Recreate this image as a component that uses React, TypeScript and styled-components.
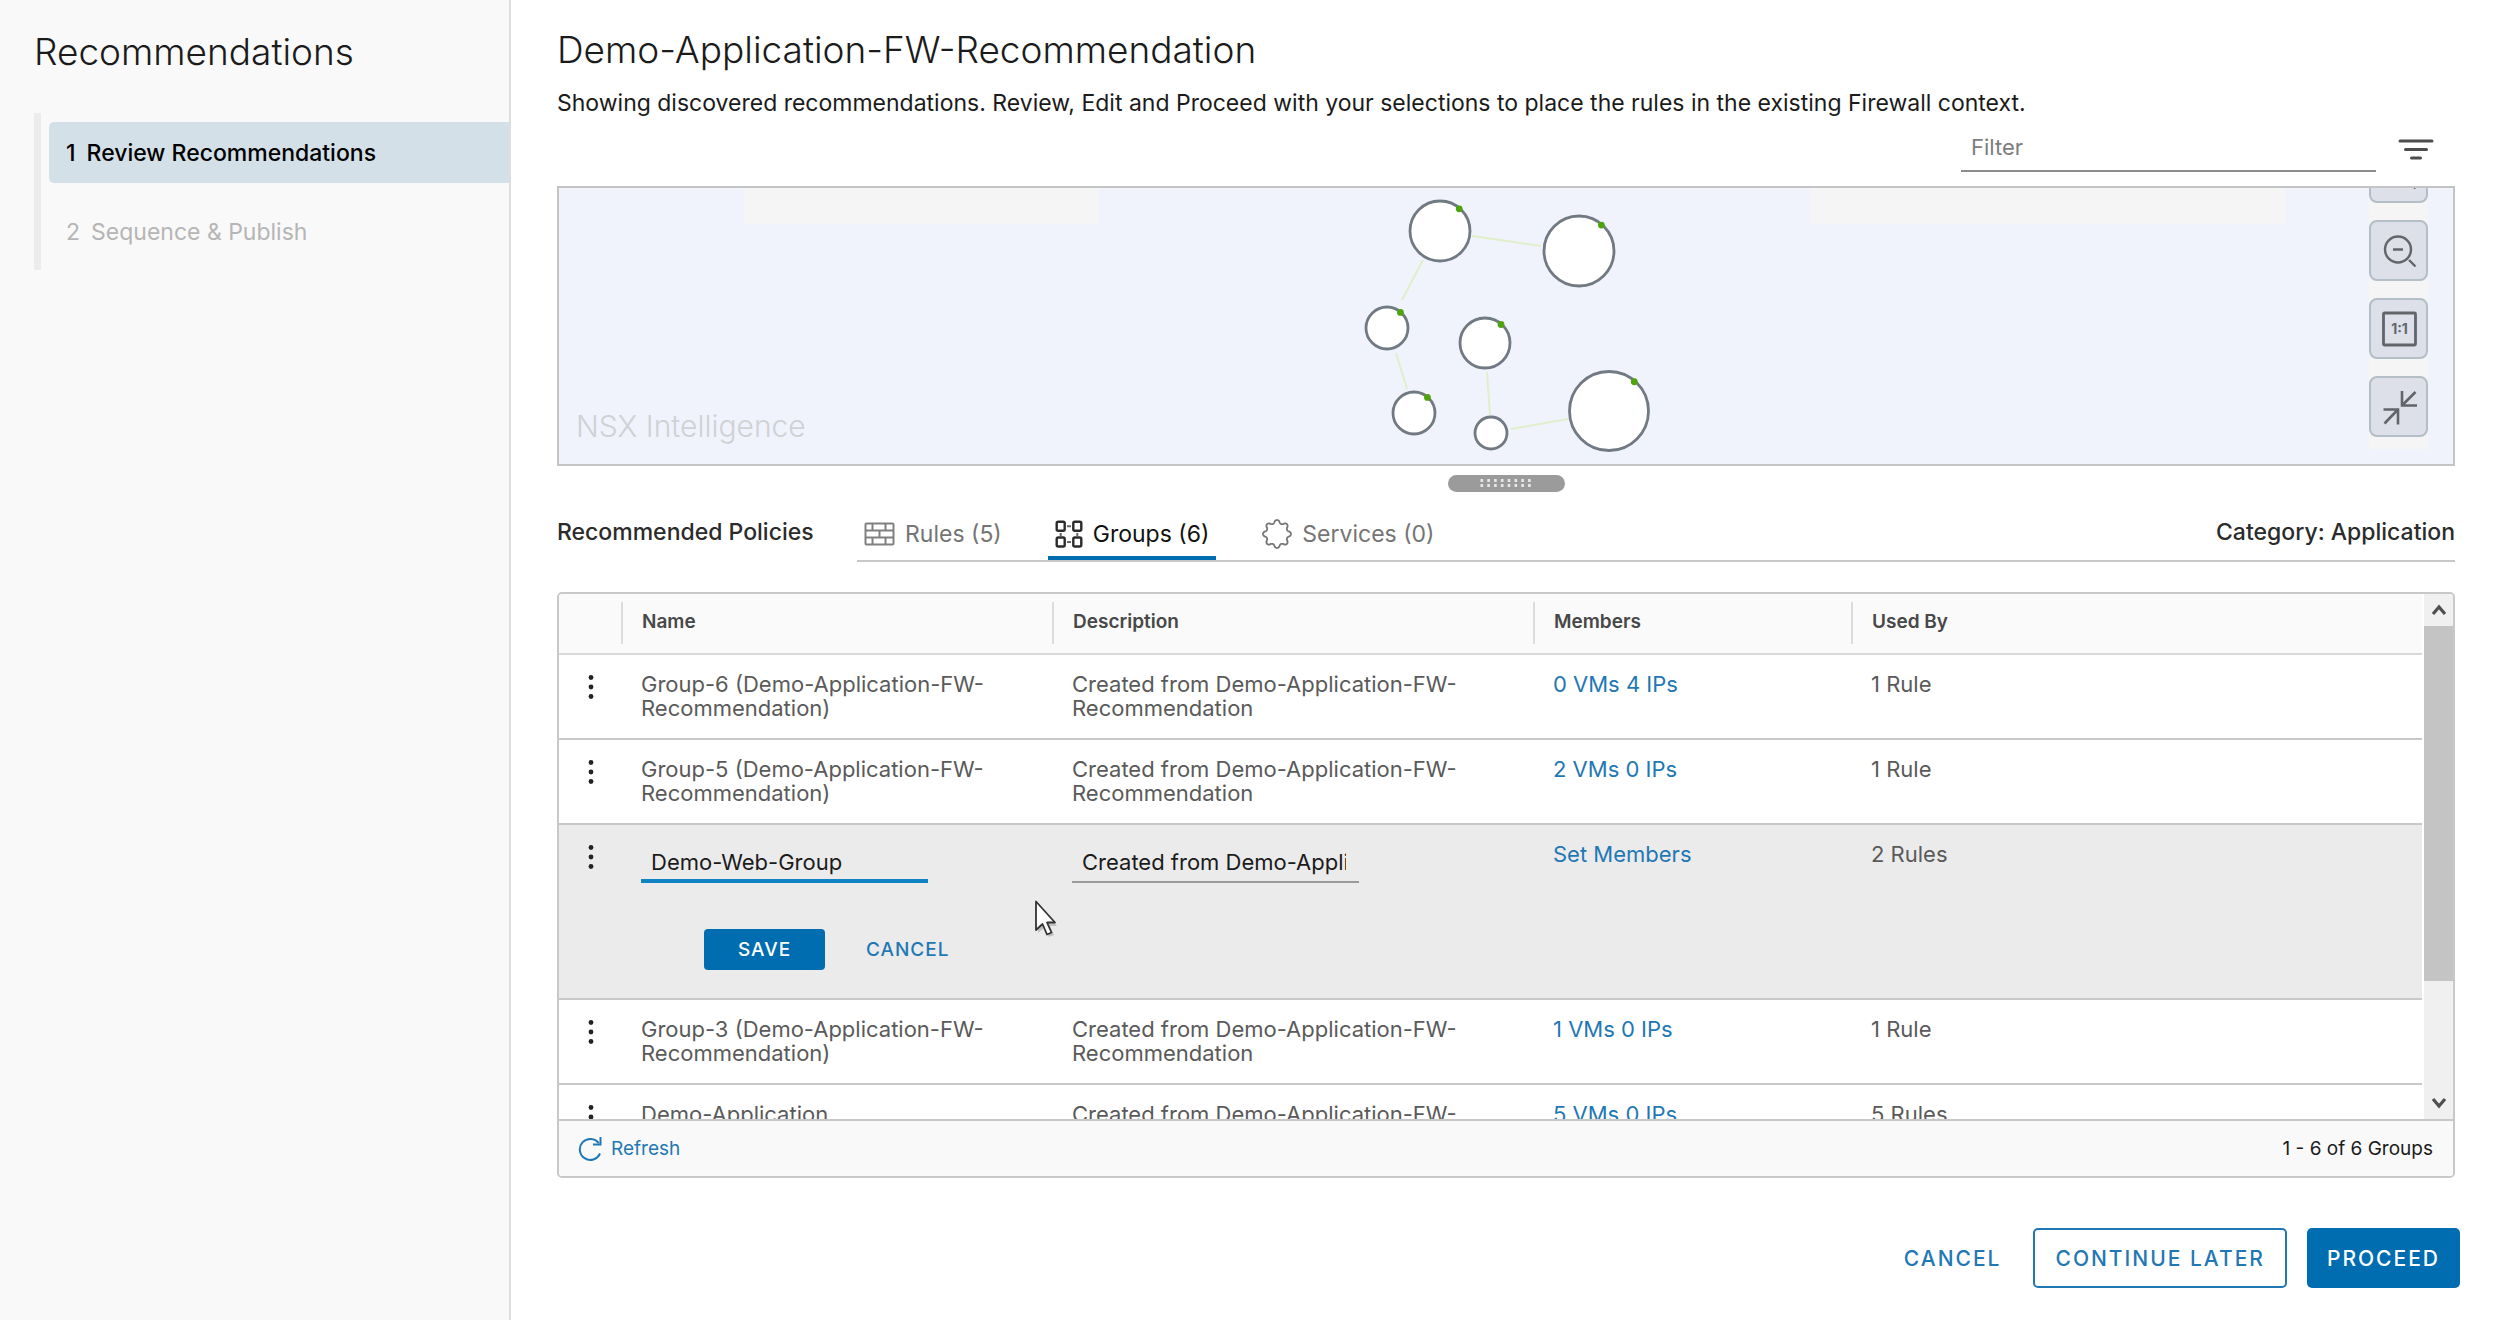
import React from "react";
import styled, { createGlobalStyle } from "styled-components";

const font = `Metropolis, Inter, "Liberation Sans", sans-serif`;
const blue = "#006db0";
const link = "#1f78b4";
const line = "#c8c8c8";

const GlobalStyle = createGlobalStyle`
  *, *::before, *::after { box-sizing: border-box; }
  body { margin: 0; background: #fff; color: #1b1b1b; font-family: ${font}; font-size: 22px; }
  button, input { font-family: inherit; }
  button { background: none; border: 0; padding: 0; cursor: pointer; }
  h1, h2, p, ol { margin: 0; padding: 0; }
  svg { display: block; flex: none; }
`;

const Layout = styled.div`
  display: flex;
  height: 100vh;
  min-height: 1000px;
`;

/* ---------- wizard sidebar ---------- */

const Sidebar = styled.aside`
  flex: none;
  width: 511px;
  padding-top: 30px;
  background: #f9f9f9;
  border-right: 2px solid #dedede;
`;

const SidebarTitle = styled.h2`
  padding-left: 34px;
  font-size: 37px;
  font-weight: 300;
  line-height: 44px;
`;

const Steps = styled.ol`
  display: flex;
  flex-direction: column;
  gap: 18px;
  margin: 39px 0 0 34px;
  padding: 9px 0 8px 8px;
  border-left: 7px solid #ececec;
  list-style: none;
`;

const Step = styled.button<{ $active?: boolean }>`
  display: flex;
  align-items: center;
  gap: 11px;
  width: 100%;
  height: 61px;
  padding-left: 17px;
  border-radius: 5px 0 0 5px;
  background: ${(p) => (p.$active ? "#d3e0e7" : "transparent")};
  color: ${(p) => (p.$active ? "#000" : "#b5b5b5")};
  font-size: 23px;
  font-weight: ${(p) => (p.$active ? 500 : 400)};
`;

/* ---------- main column ---------- */

const Main = styled.main`
  flex: 1;
  min-width: 0;
  display: flex;
  flex-direction: column;
  padding: 28px 39px 32px 46px;
`;

const Title = styled.h1`
  font-size: 37px;
  font-weight: 300;
  line-height: 44px;
`;

const Lead = styled.p`
  margin-top: 16px;
  font-size: 23px;
  line-height: 30px;
`;

const FilterBar = styled.div`
  display: flex;
  justify-content: flex-end;
  align-items: center;
  gap: 22px;
  margin-top: 12px;
  padding-right: 21px;
`;

const FilterInput = styled.input`
  width: 415px;
  height: 42px;
  padding: 0 10px 6px;
  border: 0;
  border-bottom: 2px solid #8c8c8c;
  background: none;
  font-size: 22px;
  outline: none;
  &::placeholder { color: #7d7d7d; opacity: 1; }
`;

const Canvas = styled.section`
  position: relative;
  flex: none;
  display: flex;
  justify-content: center;
  height: 280px;
  margin-top: 14px;
  border: 2px solid #c2c4c6;
  background: #f0f3fc;
  overflow: hidden;
`;

const Patch = styled.div<{ $side: "left" | "right" }>`
  position: absolute;
  top: 0;
  ${(p) => (p.$side === "left" ? "left: 185px; width: 355px;" : "right: 168px; width: 475px;")}
  height: 36px;
  background: #f5f5f5;
`;

const Watermark = styled.div`
  position: absolute;
  left: 17px;
  bottom: 20px;
  color: #cfd1d5;
  font-size: 30px;
  font-weight: 300;
  line-height: 36px;
`;

const ZoomControls = styled.div`
  position: absolute;
  top: -46px;
  right: 25px;
  display: flex;
  flex-direction: column;
  gap: 17px;
  padding-bottom: 12px;
  background: #f5f5f5;
`;

const ZoomButton = styled.button`
  display: flex;
  align-items: center;
  justify-content: center;
  width: 59px;
  height: 61px;
  border: 2px solid #b3bec7;
  border-radius: 8px;
  background: #dde0e8;
  color: #62666b;
`;

const Handle = styled.button`
  display: flex;
  align-items: center;
  justify-content: center;
  flex: none;
  align-self: center;
  width: 117px;
  height: 17px;
  margin-top: 9px;
  border-radius: 9px;
  background: #9b9b9b;
`;

/* ---------- tabs ---------- */

const PolicyBar = styled.div`
  display: flex;
  flex: none;
  height: 54px;
  margin-top: 16px;
`;

const PolicyText = styled.div`
  font-size: 23px;
  font-weight: 500;
  line-height: 48px;
  color: #2b2b2b;
`;

const PolicyTitle = styled(PolicyText)`
  flex: none;
  width: 300px;
`;

const Tabs = styled.div`
  flex: 1;
  display: flex;
  justify-content: space-between;
  border-bottom: 2px solid ${line};
`;

const TabList = styled.div`
  display: flex;
  gap: 39px;
`;

const Tab = styled.button<{ $active?: boolean }>`
  display: flex;
  align-items: center;
  gap: 10px;
  padding: 4px 7px 0;
  border-bottom: 4px solid ${(p) => (p.$active ? blue : "transparent")};
  color: ${(p) => (p.$active ? "#111" : "#757575")};
  font-size: 23px;
`;

/* ---------- data grid ---------- */

const Panel = styled.section`
  flex: 1;
  min-height: 0;
  display: flex;
  flex-direction: column;
  margin-top: 30px;
  border: 2px solid ${line};
  border-radius: 5px;
  overflow: hidden;
`;

const PanelBody = styled.div`
  flex: 1;
  min-height: 0;
  display: flex;
  gap: 2px;
`;

const TableScroll = styled.div`
  flex: 1;
  min-width: 0;
  overflow: hidden;
`;

const Table = styled.table`
  width: 100%;
  table-layout: fixed;
  border-collapse: separate;
  border-spacing: 0;
  color: #5a5a5a;
  line-height: 24px;
`;

const Col = styled.col<{ $width?: number }>`
  width: ${(p) => (p.$width ? `${p.$width}px` : "auto")};
`;

const Head = styled.th`
  padding: 8px 0 9px;
  border-bottom: 2px solid #d9d9d9;
  background: #fafafa;
  color: #484848;
  font-size: 19px;
  font-weight: 600;
  text-align: left;
`;

const HeadLabel = styled.span`
  display: block;
  height: 42px;
  padding-left: 19px;
  border-left: 2px solid #dcdcdc;
  line-height: 40px;
`;

const Cell = styled.td<{ $editing?: boolean }>`
  padding: 17px 20px ${(p) => (p.$editing ? 0 : 18)}px 20px;
  border-bottom: ${(p) => (p.$editing ? "0" : `2px solid ${line}`)};
  background: ${(p) => (p.$editing ? "#ebebeb" : "#fff")};
  vertical-align: top;
`;

const MenuCell = styled(Cell)`
  padding-left: 28px;
  padding-right: 0;
`;

const MenuButton = styled.button`
  display: block;
  padding-top: 3px;
  color: #222;
`;

const MemberLink = styled.a`
  color: ${link};
  text-decoration: none;
`;

const CellInput = styled.input<{ $focused?: boolean }>`
  display: block;
  width: 287px;
  height: 41px;
  padding: ${(p) => (p.$focused ? "2px 10px 0" : "0 13px 0 10px")};
  border: 0;
  border-bottom: ${(p) => (p.$focused ? "4px solid #0f83c4" : "2px solid #9a9a9a")};
  background: none;
  color: #1b1b1b;
  font-size: 22px;
  outline: none;
`;

const ActionCell = styled.td`
  position: relative;
  padding: 46px 0 28px 145px;
  border-bottom: 2px solid ${line};
  background: #ebebeb;
`;

const ActionRow = styled.div`
  display: flex;
  align-items: center;
  gap: 41px;
`;

const Pointer = styled.svg`
  position: absolute;
  left: 475px;
  top: 17px;
`;

const SmallButton = styled.button<{ $solid?: boolean }>`
  width: ${(p) => (p.$solid ? "121px" : "auto")};
  height: 41px;
  border-radius: 4px;
  background: ${(p) => (p.$solid ? blue : "none")};
  color: ${(p) => (p.$solid ? "#fff" : link)};
  font-size: 19px;
  font-weight: 500;
  letter-spacing: 1px;
`;

const Scrollbar = styled.div`
  flex: none;
  display: flex;
  flex-direction: column;
  width: 29px;
  background: #f0f0f0;
`;

const ScrollArrow = styled.button`
  display: flex;
  align-items: center;
  justify-content: center;
  height: 32px;
  color: #505050;
`;

const ScrollTrack = styled.div`
  flex: 1;
`;

const ScrollThumb = styled.div`
  height: 77%;
  background: #c4c4c4;
`;

const PanelFooter = styled.footer`
  flex: none;
  display: flex;
  align-items: center;
  justify-content: space-between;
  height: 57px;
  padding: 0 20px 0 19px;
  border-top: 2px solid ${line};
  background: #f9f9f9;
  font-size: 19px;
`;

const RefreshButton = styled.button`
  display: flex;
  align-items: center;
  gap: 9px;
  color: ${link};
  font-size: 19px;
`;

/* ---------- page actions ---------- */

const Actions = styled.div`
  flex: none;
  display: flex;
  justify-content: flex-end;
  gap: 20px;
  margin: 50px -5px 0 0;
`;

const ActionButton = styled.button<{ $kind: "flat" | "outline" | "solid" }>`
  height: 60px;
  padding: 0 ${(p) => (p.$kind === "flat" ? 12 : 20)}px;
  border: ${(p) => (p.$kind === "outline" ? `2px solid ${link}` : "0")};
  border-radius: 5px;
  background: ${(p) => (p.$kind === "solid" ? blue : "#fff")};
  color: ${(p) => (p.$kind === "solid" ? "#fff" : link)};
  font-size: 21px;
  font-weight: 500;
  letter-spacing: 2px;
`;

/* ---------- drawings ---------- */

const nodes = [
  { x: 84, y: 43, r: 30, dot: true },
  { x: 223, y: 63, r: 35, dot: true },
  { x: 31, y: 140, r: 21, dot: true },
  { x: 129, y: 155, r: 25, dot: true },
  { x: 58, y: 225, r: 21, dot: true },
  { x: 135, y: 245, r: 16, dot: false },
  { x: 253, y: 223, r: 39.5, dot: true },
];

const edges = [
  [116, 48, 185, 58],
  [67, 72, 46, 112],
  [40, 165, 51, 201],
  [131, 184, 134, 227],
  [155, 241, 212, 231],
];

const FlowGraph = () => (
  <svg width="300" height="276" viewBox="0 0 300 276" role="img" aria-label="Recommendation graph">
    {edges.map(([x1, y1, x2, y2], i) => (
      <line key={i} x1={x1} y1={y1} x2={x2} y2={y2} stroke="#e0efca" strokeWidth="2" />
    ))}
    {nodes.map((n, i) => (
      <g key={i}>
        <circle cx={n.x} cy={n.y} r={n.r} fill="#fff" stroke="#717982" strokeWidth="2.8" />
        {n.dot && <circle cx={n.x + n.r * 0.64} cy={n.y - n.r * 0.74} r="3.4" fill="#4fa30c" />}
      </g>
    ))}
  </svg>
);

const FilterIcon = () => (
  <svg width="36" height="24" viewBox="0 0 36 24" stroke="#4d4d4d" strokeWidth="3" strokeLinecap="round">
    <path d="M2 2h32M7.500 10.500h21M13.500 19h9" />
  </svg>
);

const ZoomInIcon = () => (
  <svg width="36" height="36" viewBox="0 0 36 36" fill="none" stroke="currentColor" strokeWidth="2.400">
    <circle cx="17" cy="16.500" r="13" />
    <path d="M12 16.500h10M17 11.500v10M28 27l6.500 6.500" />
  </svg>
);

const ZoomOutIcon = () => (
  <svg width="36" height="36" viewBox="0 0 36 36" fill="none" stroke="currentColor" strokeWidth="2.400">
    <circle cx="17" cy="16.500" r="13" />
    <path d="M12 16.500h10M28 27l6.500 6.500" />
  </svg>
);

const ActualSizeIcon = () => (
  <svg width="36" height="36" viewBox="0 0 36 36" fill="none" stroke="currentColor" strokeWidth="2.800">
    <rect x="2.500" y="2" width="32" height="32" rx="1" />
    <text x="18.500" y="23" textAnchor="middle" fontSize="14" fontWeight="700" fill="currentColor" stroke="none">
      1:1
    </text>
  </svg>
);

const CollapseIcon = () => (
  <svg width="38" height="38" viewBox="0 0 38 38" fill="none" stroke="currentColor" strokeWidth="2.600">
    <path d="M22 3v14.500H37M22 17.500L35.500 4" />
    <path d="M3.500 21.500H18V36.500M18 21.500L4.500 35.500" />
  </svg>
);

const HandleDots = () => (
  <svg width="52" height="9" viewBox="0 0 52 9" fill="#e8e8e8">
    {Array.from({ length: 8 }, (_, i) => (
      <g key={i}>
        <rect x={i * 6.8 + 0.5} y="0" width="2.600" height="3" />
        <rect x={i * 6.8 + 0.5} y="5" width="2.600" height="3" />
      </g>
    ))}
  </svg>
);

const RulesIcon = () => (
  <svg width="31" height="24" viewBox="0 0 31 24" fill="none" stroke="#808080" strokeWidth="2">
    <rect x="1.500" y="1.500" width="28" height="21" rx="1" />
    <path d="M1.500 8.500h28M1.500 15.500h28M8.500 1.500v7M21.500 1.500v7M15.500 8.500v7M8.500 15.500v7M21.500 15.500v7" />
  </svg>
);

const GroupsIcon = () => (
  <svg width="28" height="28" viewBox="0 0 28 28" fill="none" stroke="#2b2b2b" strokeWidth="2.400">
    <rect x="1.700" y="1.700" width="8" height="9" rx="1.500" />
    <rect x="18.300" y="1.700" width="8" height="9" rx="1.500" />
    <rect x="1.700" y="17.500" width="8" height="9" rx="1.500" />
    <rect x="18.300" y="17.500" width="8" height="9" rx="1.500" />
    <path d="M12 6.200h4M12 22h4M5.700 13v3M22.300 13v3" stroke="#666" strokeWidth="2" />
  </svg>
);

const servicesOutline = (() => {
  const teeth = 8;
  const steps = 240;
  const pts: string[] = [];
  for (let i = 0; i < steps; i++) {
    const a = (i / steps) * Math.PI * 2;
    const wave = Math.cos(a * teeth);
    const r = 12.4 + 1.6 * Math.sign(wave) * Math.pow(Math.abs(wave), 0.7);
    pts.push(`${(15 + r * Math.sin(a)).toFixed(2)} ${(15 - r * Math.cos(a)).toFixed(2)}`);
  }
  return `M${pts.join("L")}Z`;
})();

const ServicesIcon = () => (
  <svg width="30" height="30" viewBox="0 0 30 30" fill="none" stroke="#777" strokeWidth="1.800" strokeLinejoin="round">
    <path d={servicesOutline} />
  </svg>
);

const KebabIcon = () => (
  <svg width="8" height="24" viewBox="0 0 8 24" fill="currentColor">
    <circle cx="4" cy="2.500" r="2.400" />
    <circle cx="4" cy="12" r="2.400" />
    <circle cx="4" cy="21.500" r="2.400" />
  </svg>
);

const RefreshIcon = () => (
  <svg width="24" height="25" viewBox="0 0 24 25" fill="none" stroke="currentColor" strokeWidth="2">
    <path d="M22 17.500A10.500 10.500 0 1 1 20.800 7.200" />
    <path d="M22.500 1v7.500H15" />
  </svg>
);

const Chevron = ({ up }: { up?: boolean }) => (
  <svg width="16" height="12" viewBox="0 0 16 12" fill="none" stroke="currentColor" strokeWidth="3.200">
    <path d={up ? "M2 10l6-7 6 7" : "M2 2l6 7 6-7"} />
  </svg>
);

const MousePointer = () => (
  <Pointer width="26" height="38" viewBox="0 0 26 38" aria-hidden="true">
    <path d="M4 4v29l6-5 5 9 5-2-4-9h7z" fill="#000" opacity="0.18" />
    <path d="M2 1.500v28.500l6.500-6 4.500 10.500 4.500-2-4.500-10h8z" fill="#fff" stroke="#333" strokeWidth="1.800" strokeLinejoin="round" />
  </Pointer>
);

/* ---------- table rows ---------- */

type Group = { name: string; description: string; members: string; usedBy: string };

const description = "Created from Demo-Application-FW-Recommendation";

const before: Group[] = [
  { name: "Group-6 (Demo-Application-FW-Recommendation)", description, members: "0 VMs 4 IPs", usedBy: "1 Rule" },
  { name: "Group-5 (Demo-Application-FW-Recommendation)", description, members: "2 VMs 0 IPs", usedBy: "1 Rule" },
];

const after: Group[] = [
  { name: "Group-3 (Demo-Application-FW-Recommendation)", description, members: "1 VMs 0 IPs", usedBy: "1 Rule" },
  { name: "Demo-Application", description, members: "5 VMs 0 IPs", usedBy: "5 Rules" },
];

const GroupRow = ({ group }: { group: Group }) => (
  <tr>
    <MenuCell>
      <MenuButton aria-label={`Actions for ${group.name}`}>
        <KebabIcon />
      </MenuButton>
    </MenuCell>
    <Cell>{group.name}</Cell>
    <Cell>{group.description}</Cell>
    <Cell>
      <MemberLink href="#members">{group.members}</MemberLink>
    </Cell>
    <Cell>{group.usedBy}</Cell>
  </tr>
);

const EditRow = () => {
  const [name, setName] = React.useState("Demo-Web-Group");
  const [text, setText] = React.useState(description);
  return (
    <>
      <tr>
        <MenuCell $editing>
          <MenuButton aria-label="Actions for Demo-Web-Group">
            <KebabIcon />
          </MenuButton>
        </MenuCell>
        <Cell $editing>
          <CellInput $focused aria-label="Name" value={name} onChange={(e) => setName(e.target.value)} />
        </Cell>
        <Cell $editing>
          <CellInput aria-label="Description" value={text} onChange={(e) => setText(e.target.value)} />
        </Cell>
        <Cell $editing>
          <MemberLink href="#members">Set Members</MemberLink>
        </Cell>
        <Cell $editing>2 Rules</Cell>
      </tr>
      <tr>
        <ActionCell colSpan={5}>
          <ActionRow>
            <SmallButton $solid>SAVE</SmallButton>
            <SmallButton>CANCEL</SmallButton>
          </ActionRow>
          <MousePointer />
        </ActionCell>
      </tr>
    </>
  );
};

export default function App() {
  return (
    <Layout>
      <GlobalStyle />
      <Sidebar>
        <SidebarTitle>Recommendations</SidebarTitle>
        <Steps>
          <li>
            <Step $active>
              <span>1</span>
              <span>Review Recommendations</span>
            </Step>
          </li>
          <li>
            <Step>
              <span>2</span>
              <span>Sequence &amp; Publish</span>
            </Step>
          </li>
        </Steps>
      </Sidebar>

      <Main>
        <Title>Demo-Application-FW-Recommendation</Title>
        <Lead>
          Showing discovered recommendations. Review, Edit and Proceed with your selections to place the rules in the
          existing Firewall context.
        </Lead>
        <FilterBar>
          <FilterInput placeholder="Filter" aria-label="Filter" />
          <button aria-label="Filter options">
            <FilterIcon />
          </button>
        </FilterBar>

        <Canvas>
          <Patch $side="left" />
          <Patch $side="right" />
          <FlowGraph />
          <Watermark>NSX Intelligence</Watermark>
          <ZoomControls>
            <ZoomButton aria-label="Zoom in">
              <ZoomInIcon />
            </ZoomButton>
            <ZoomButton aria-label="Zoom out">
              <ZoomOutIcon />
            </ZoomButton>
            <ZoomButton aria-label="Actual size">
              <ActualSizeIcon />
            </ZoomButton>
            <ZoomButton aria-label="Collapse">
              <CollapseIcon />
            </ZoomButton>
          </ZoomControls>
        </Canvas>
        <Handle aria-label="Resize panel">
          <HandleDots />
        </Handle>

        <PolicyBar>
          <PolicyTitle>Recommended Policies</PolicyTitle>
          <Tabs>
            <TabList role="tablist">
              <Tab role="tab">
                <RulesIcon />
                Rules (5)
              </Tab>
              <Tab role="tab" aria-selected $active>
                <GroupsIcon />
                Groups (6)
              </Tab>
              <Tab role="tab">
                <ServicesIcon />
                Services (0)
              </Tab>
            </TabList>
            <PolicyText>Category: Application</PolicyText>
          </Tabs>
        </PolicyBar>

        <Panel>
          <PanelBody>
            <TableScroll>
              <Table>
                <colgroup>
                  <Col $width={62} />
                  <Col $width={431} />
                  <Col $width={481} />
                  <Col $width={318} />
                  <Col />
                </colgroup>
                <thead>
                  <tr>
                    <Head aria-label="Actions" />
                    {["Name", "Description", "Members", "Used By"].map((label) => (
                      <Head key={label}>
                        <HeadLabel>{label}</HeadLabel>
                      </Head>
                    ))}
                  </tr>
                </thead>
                <tbody>
                  {before.map((g) => (
                    <GroupRow key={g.name} group={g} />
                  ))}
                  <EditRow />
                  {after.map((g) => (
                    <GroupRow key={g.name} group={g} />
                  ))}
                </tbody>
              </Table>
            </TableScroll>
            <Scrollbar>
              <ScrollArrow aria-label="Scroll up">
                <Chevron up />
              </ScrollArrow>
              <ScrollTrack>
                <ScrollThumb />
              </ScrollTrack>
              <ScrollArrow aria-label="Scroll down">
                <Chevron />
              </ScrollArrow>
            </Scrollbar>
          </PanelBody>
          <PanelFooter>
            <RefreshButton>
              <RefreshIcon />
              Refresh
            </RefreshButton>
            <span>1 - 6 of 6 Groups</span>
          </PanelFooter>
        </Panel>

        <Actions>
          <ActionButton $kind="flat">CANCEL</ActionButton>
          <ActionButton $kind="outline">CONTINUE LATER</ActionButton>
          <ActionButton $kind="solid">PROCEED</ActionButton>
        </Actions>
      </Main>
    </Layout>
  );
}
